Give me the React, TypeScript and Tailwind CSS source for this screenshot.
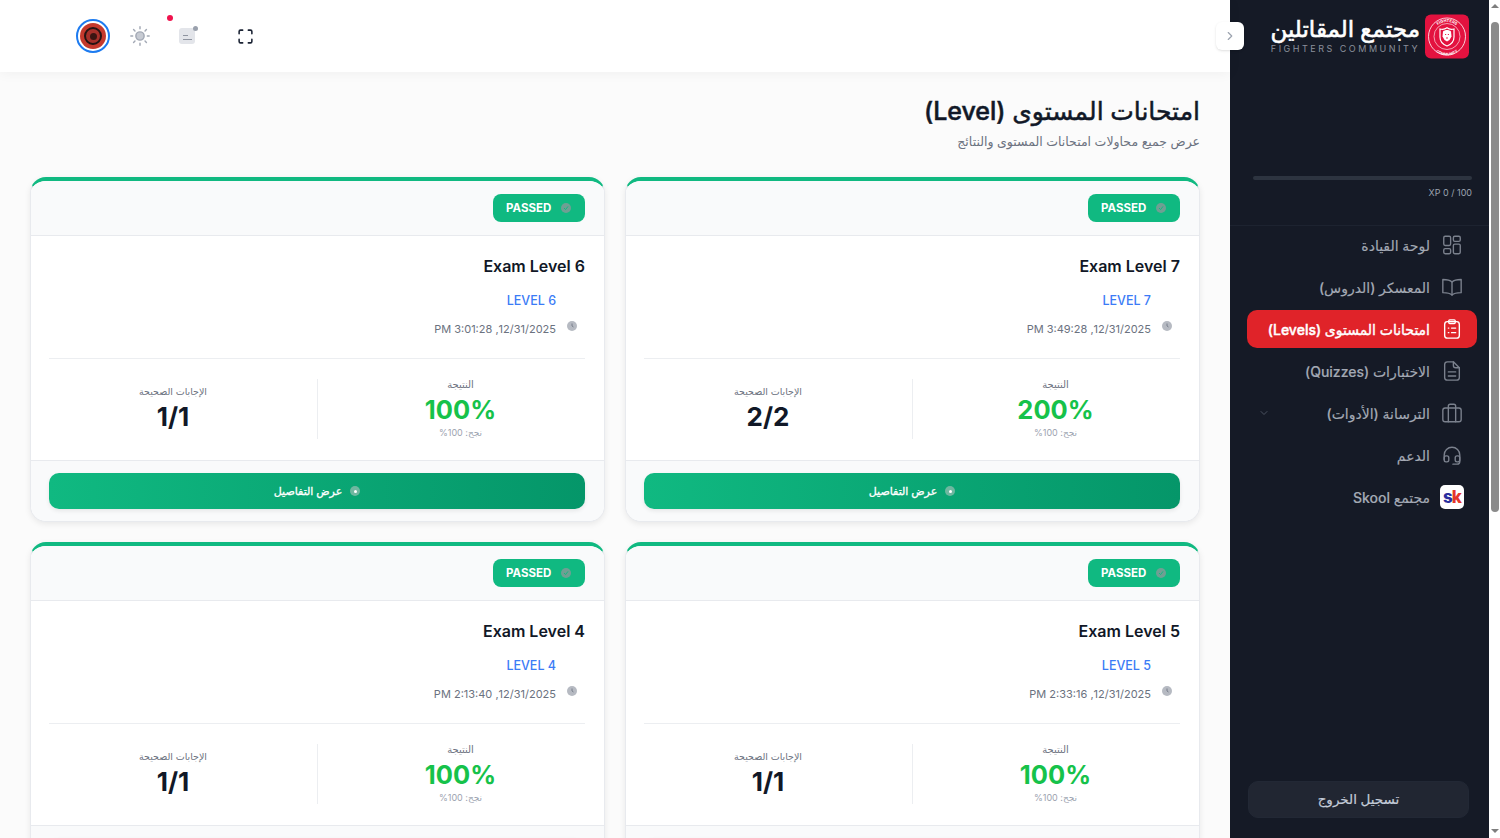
import React from 'react';
import { ChevronDown, ChevronRight, Maximize } from 'lucide-react';

interface Attempt {
  title: string;
  level: string;
  date: string;
  score: string;
  correct: string;
}

const attempts: Attempt[] = [
  { title: 'Exam Level 7', level: 'LEVEL 7', date: '12/31/2025, 3:49:28 PM', score: '200%', correct: '2/2' },
  { title: 'Exam Level 6', level: 'LEVEL 6', date: '12/31/2025, 3:01:28 PM', score: '100%', correct: '1/1' },
  { title: 'Exam Level 5', level: 'LEVEL 5', date: '12/31/2025, 2:33:16 PM', score: '100%', correct: '1/1' },
  { title: 'Exam Level 4', level: 'LEVEL 4', date: '12/31/2025, 2:13:40 PM', score: '100%', correct: '1/1' },
];

const stroke = {
  fill: 'none',
  stroke: 'currentColor',
  strokeWidth: 1.5,
  strokeLinecap: 'round' as const,
  strokeLinejoin: 'round' as const,
};

const GridIcon = () => (
  <svg viewBox="0 0 24 24" className="h-[22px] w-[22px]" {...stroke}>
    <rect x="3" y="2.500" width="7.500" height="10" rx="1.500" />
    <rect x="3" y="16" width="7.500" height="5.500" rx="1.500" />
    <rect x="13.500" y="2.500" width="7.500" height="5.500" rx="1.500" />
    <rect x="13.500" y="11" width="7.500" height="10.500" rx="1.500" />
  </svg>
);

const BookIcon = () => (
  <svg viewBox="0 0 24 24" className="h-[22px] w-[22px]" {...stroke}>
    <path d="M12 6.500C10 4.500 7 3.800 2 3.800v14.400c5 0 8 .6 10 2.600 2-2 5-2.600 10-2.600V3.800c-5 0-8 .7-10 2.700Z" />
    <path d="M12 6.500v14.300" />
  </svg>
);

const ClipboardIcon = () => (
  <svg viewBox="0 0 24 24" className="h-[22px] w-[22px]" {...stroke}>
    <rect x="4" y="4" width="16" height="18" rx="3" />
    <rect x="8.500" y="2" width="7" height="4" rx="1" />
    <path d="M8 11h.5M11.500 11H16M8 16h.5M11.500 16H16" />
  </svg>
);

const FileIcon = () => (
  <svg viewBox="0 0 24 24" className="h-[22px] w-[22px]" {...stroke}>
    <path d="M13.500 2H7a3 3 0 0 0-3 3v14a3 3 0 0 0 3 3h10a3 3 0 0 0 3-3V8.500L13.500 2Z" />
    <path d="M13.500 2v4a2.500 2.500 0 0 0 2.500 2.500h4M8 13h8M8 17.500h8" />
  </svg>
);

const ToolboxIcon = () => (
  <svg viewBox="0 0 24 24" className="h-[22px] w-[22px]" {...stroke}>
    <rect x="2" y="6.500" width="20" height="15" rx="2.500" />
    <path d="M8 21.500V4.500A2 2 0 0 1 10 2.500h4a2 2 0 0 1 2 2v17" />
  </svg>
);

const HeadsetIcon = () => (
  <svg viewBox="0 0 24 24" className="h-[22px] w-[22px]" {...stroke}>
    <path d="M3.500 17v-5a8.500 8.500 0 0 1 17 0v7a3 3 0 0 1-3 3H13" />
    <rect x="3.500" y="13" width="5" height="6.500" rx="2" />
    <rect x="15.500" y="13" width="5" height="6.500" rx="2" />
  </svg>
);

const SkoolIcon = () => (
  <div className="flex h-[24px] w-[24px] items-center justify-center rounded-[5px] bg-white text-[17px] leading-none font-extrabold tracking-[-1px]">
    <span dir="ltr">
      <span className="text-[#2a2f9e]">s</span>
      <span className="text-[#e5352b]">k</span>
    </span>
  </div>
);

const LogoMark = () => (
  <svg viewBox="0 0 44 44" className="h-[45px] w-[44px]">
    <rect width="44" height="44" rx="6" fill="#e3123f" />
    <circle cx="22" cy="22" r="18.500" fill="none" stroke="#fff" strokeWidth="0.800" />
    <circle cx="22" cy="22" r="13" fill="none" stroke="#fff" strokeWidth="0.600" />
    <path id="logo-top" d="M7.500 22a14.500 14.500 0 0 1 29 0" fill="none" />
    <path id="logo-bottom" d="M5 24a17 17 0 0 0 34 0" fill="none" />
    <text fontSize="4" fontWeight="700" fill="#fff" textAnchor="middle">
      <textPath href="#logo-top" startOffset="50%">FIGHTERS</textPath>
    </text>
    <text fontSize="3.600" fontWeight="700" fill="#fff" textAnchor="middle">
      <textPath href="#logo-bottom" startOffset="50%">COMMUNITY</textPath>
    </text>
    <path d="M15 14.500c3 .8 5 .3 7-1.200 2 1.500 4 2 7 1.200v8c0 4.500-3 7.500-7 9-4-1.500-7-4.500-7-9v-8Z" fill="none" stroke="#fff" strokeWidth="1.200" />
    <path d="M18 17c2-2 6-2 8 0l.5 5-2 3.500-2.500 1.500-2.500-1.500-2-3.500.5-5Z" fill="#fff" />
    <path d="M20 20h1.200M22.800 20H24M21 23.500h2" stroke="#e3123f" strokeWidth="0.900" />
  </svg>
);

const navItems = [
  { label: 'لوحة القيادة', icon: <GridIcon /> },
  { label: 'المعسكر (الدروس)', icon: <BookIcon /> },
  { label: 'امتحانات المستوى (Levels)', icon: <ClipboardIcon />, active: true },
  { label: 'الاختبارات (Quizzes)', icon: <FileIcon /> },
  { label: 'الترسانة (الأدوات)', icon: <ToolboxIcon />, chevron: true },
  { label: 'الدعم', icon: <HeadsetIcon /> },
  { label: 'مجتمع Skool', icon: <SkoolIcon /> },
];

const Sidebar = () => (
  <aside dir="rtl" className="flex h-full w-[259px] flex-none flex-col bg-[#151a26]">
    <div className="flex h-[72px] flex-none items-center gap-[5px] pr-[20px]">
      <LogoMark />
      <div className="flex flex-col items-start">
        <span className="text-[23px] leading-[24px] font-medium whitespace-nowrap text-white [-webkit-text-stroke:0.6px_#fff]">مجتمع المقاتلين</span>
        <span dir="ltr" className="mt-[2px] text-[9px] leading-[12px] tracking-[2.500px] text-[#8b909b]">FIGHTERS COMMUNITY</span>
      </div>
    </div>

    <div className="flex h-[154px] flex-none flex-col border-b border-[#1d2330] px-[17px] pt-[104px]">
      <div className="h-[4px] w-[219px] rounded-full bg-[#2d3440]" />
      <div dir="ltr" className="mt-[7px] w-[219px] text-right text-[9px] leading-[12px] text-[#9ca3af]">XP 0 / 100</div>
    </div>

    <nav className="flex flex-col gap-[4px] pr-[12px] pl-[17px]">
      {navItems.map((item) => (
        <div
          key={item.label}
          className={`flex h-[38px] items-center gap-[10px] rounded-[10px] pr-[13px] pl-[11px] text-[14px] font-medium ${
            item.active ? 'bg-[#e02329] text-white [-webkit-text-stroke:0.4px_#fff]' : 'text-[#a3a9b4] [-webkit-text-stroke:0.15px_#a3a9b4]'
          }`}
        >
          <span className={`flex w-[24px] flex-none justify-center [-webkit-text-stroke:0] ${item.active ? 'text-white' : 'text-[#7b818d]'}`}>{item.icon}</span>
          <span className="flex-1 whitespace-nowrap">{item.label}</span>
          {item.chevron && <ChevronDown size={12} className="text-[#4b5260]" />}
        </div>
      ))}
    </nav>

    <div className="mt-auto pr-[20px] pb-[20px] pl-[18px]">
      <div className="flex h-[37px] w-[221px] items-center justify-center rounded-[10px] border border-[#222835] bg-[#212632] text-[13.500px] font-medium text-[#c3cbd8] [-webkit-text-stroke:0.2px_#c3cbd8]">
        تسجيل الخروج
      </div>
    </div>
  </aside>
);

const TopBar = () => (
  <header dir="ltr" className="relative z-10 flex h-[72px] flex-none items-center bg-white pl-[76px] shadow-[0_1px_12px_rgba(0,0,0,0.05)]">
    <div className="flex h-[34px] w-[34px] items-center justify-center rounded-full border-2 border-[#1d7bf0] bg-white">
      <div className="flex h-[26px] w-[26px] items-center justify-center rounded-full bg-[#c4392d]">
        <div className="flex h-[18px] w-[18px] items-center justify-center rounded-full border-2 border-[#241313] bg-[#a5302a]">
          <div className="h-[7px] w-[7px] rounded-full bg-[#3a1512]" />
        </div>
      </div>
    </div>

    <svg viewBox="0 0 24 24" className="ml-[19px] h-[22px] w-[22px] blur-[0.5px]" fill="none" stroke="#a3a9b5" strokeWidth="1.600" strokeLinecap="round">
      <circle cx="12" cy="12" r="4.500" fill="#c7cbd3" />
      <path d="M12 2v2M12 20v2M2 12h2M20 12h2M5 5l1.500 1.500M17.500 17.500 19 19M5 19l1.500-1.500M17.500 6.500 19 5" />
    </svg>

    <div className="relative ml-[28px] h-[16px] w-[16px] rounded-[3px] bg-[#e3e5ea]">
      <div className="mx-auto mt-[7px] h-[1px] w-[5px] -translate-x-[2px] bg-[#8e94a0]" />
      <div className="mx-auto mt-[3px] h-[1px] w-[9px] bg-[#8e94a0]" />
      <div className="absolute -top-[2px] -right-[3px] h-[5px] w-[5px] rounded-full bg-[#9aa1ad]" />
      <div className="absolute -top-[13px] -left-[12px] h-[6px] w-[6px] rounded-full bg-[#f0134d]" />
    </div>

    <Maximize size={17} strokeWidth={2.200} className="ml-[42px] text-[#1a2233]" />
  </header>
);

const ExamCard = ({ attempt }: { attempt: Attempt }) => (
  <div className="overflow-hidden rounded-[16px] border border-t-[4px] border-[#e8eaee] border-t-[#10b981] bg-white shadow-[0_2px_6px_rgba(0,0,0,0.08)]">
    <div className="flex h-[55px] items-center border-b border-[#e8eaee] bg-[#f9fafb] pr-[19px] pl-[18px]">
      <div className="flex h-[28px] w-[92px] items-center justify-between rounded-[8px] bg-[#10b981] pr-[14px] pl-[13px] text-[11.500px] font-bold text-white">
        <span className="flex h-[10px] w-[10px] items-center justify-center rounded-full bg-[#6f9f93]">
          <svg viewBox="0 0 10 10" className="h-[8px] w-[8px]" fill="none" stroke="#10b981" strokeWidth="1.200">
            <path d="m2.500 5 2 2 3-4" />
          </svg>
        </span>
        <span dir="ltr" className="pt-[2px]">PASSED</span>
      </div>
    </div>

    <div className="pt-[18px] pr-[19px] pb-[21px] pl-[18px]">
      <h3 dir="ltr" className="text-right text-[16px] leading-[24px] font-semibold text-[#111827]">{attempt.title}</h3>
      <div className="mt-[13px] pr-[29px] text-[12.500px] leading-[20px] font-medium text-[#3b7bf6]">
        <span dir="ltr">{attempt.level}</span>
      </div>
      <div className="mt-[8px] flex items-start gap-[11px] pr-[8px] text-[11px] leading-[20px] text-[#6b7280]">
        <span className="mt-[2px] flex h-[10px] w-[10px] flex-none items-center justify-center rounded-full bg-[#b6bac2]">
          <svg viewBox="0 0 10 10" className="h-[10px] w-[10px]" fill="none" stroke="#6b7280" strokeWidth="0.800">
            <path d="M5 2.500V5l1.500 1" />
          </svg>
        </span>
        <span>{attempt.date}</span>
      </div>

      <div className="mt-[19px] border-t border-[#eceef1]" />

      <div className="mt-[20px] grid h-[60px] grid-cols-2">
        <div className="flex flex-col items-center border-l border-[#eceef1] pl-[18px]">
          <span className="-mt-[1px] text-[10px] leading-[13px] text-[#6b7280]">النتيجة</span>
          <span dir="ltr" className="mt-[4px] text-[25.500px] leading-[30px] font-bold text-[#16c24a]">{attempt.score}</span>
          <span className="mt-[2px] text-[9px] leading-[12px] text-[#9ca3af]">نجح: 100%</span>
        </div>
        <div className="flex flex-col items-center justify-center pr-[20px]">
          <span className="text-[9.500px] leading-[13px] text-[#6b7280]">الإجابات الصحيحة</span>
          <span dir="ltr" className="mt-[3px] text-[26px] leading-[32px] font-bold text-[#111827]">{attempt.correct}</span>
        </div>
      </div>
    </div>

    <div className="border-t border-[#e8eaee] bg-[#f9fafb] pt-[12px] pr-[19px] pb-[12px] pl-[18px]">
      <div className="flex h-[36px] items-center justify-center gap-[8px] rounded-[10px] bg-gradient-to-r from-[#10b981] to-[#059669] text-[11px] font-medium text-white shadow-[0_2px_4px_rgba(0,0,0,0.08)] [-webkit-text-stroke:0.3px_#fff]">
        <span className="flex h-[10px] w-[10px] items-center justify-center rounded-full bg-[#6fb7a0]">
          <span className="h-[3px] w-[3px] rounded-full bg-white" />
        </span>
        <span>عرض التفاصيل</span>
      </div>
    </div>
  </div>
);

const ScrollBar = () => (
  <div className="flex h-full w-[11px] flex-none flex-col items-center bg-white">
    <div className="mt-[4px] h-0 w-0 border-x-[4px] border-b-[4px] border-x-transparent border-b-[#7e7e7e]" />
    <div className="mt-[14px] h-[490px] w-[8px] rounded-full bg-[#8b8b8b]" />
    <div className="mt-auto mb-[5px] h-0 w-0 border-x-[4px] border-t-[4px] border-x-transparent border-t-[#7e7e7e]" />
  </div>
);

export default function App() {
  return (
    <div
      dir="ltr"
      className="relative flex h-[838px] w-[1500px] overflow-hidden bg-[#fbfbfb]"
      style={{ fontFamily: 'Inter, "Noto Sans", "DejaVu Sans", sans-serif' }}
    >
      <div className="flex min-w-0 flex-1 flex-col">
        <TopBar />
        <main dir="rtl" className="flex-1 overflow-hidden px-[30px] pt-[23px]">
          <h1 className="text-[25px] leading-[32px] font-medium text-[#111827] [-webkit-text-stroke:0.5px_#111827]">امتحانات المستوى (Level)</h1>
          <p className="mt-[5px] text-[12.500px] leading-[20px] text-[#6b7280]">عرض جميع محاولات امتحانات المستوى والنتائج</p>
          <div className="mt-[25px] grid grid-cols-2 gap-[20px]">
            {attempts.map((attempt) => (
              <ExamCard key={attempt.title} attempt={attempt} />
            ))}
          </div>
        </main>
      </div>

      <Sidebar />
      <ScrollBar />

      <button className="absolute top-[22px] left-[1216px] z-20 flex h-[28px] w-[28px] items-center justify-center rounded-[6px] bg-white text-[#9ca3af] shadow-sm">
        <ChevronRight size={14} />
      </button>
    </div>
  );
}
